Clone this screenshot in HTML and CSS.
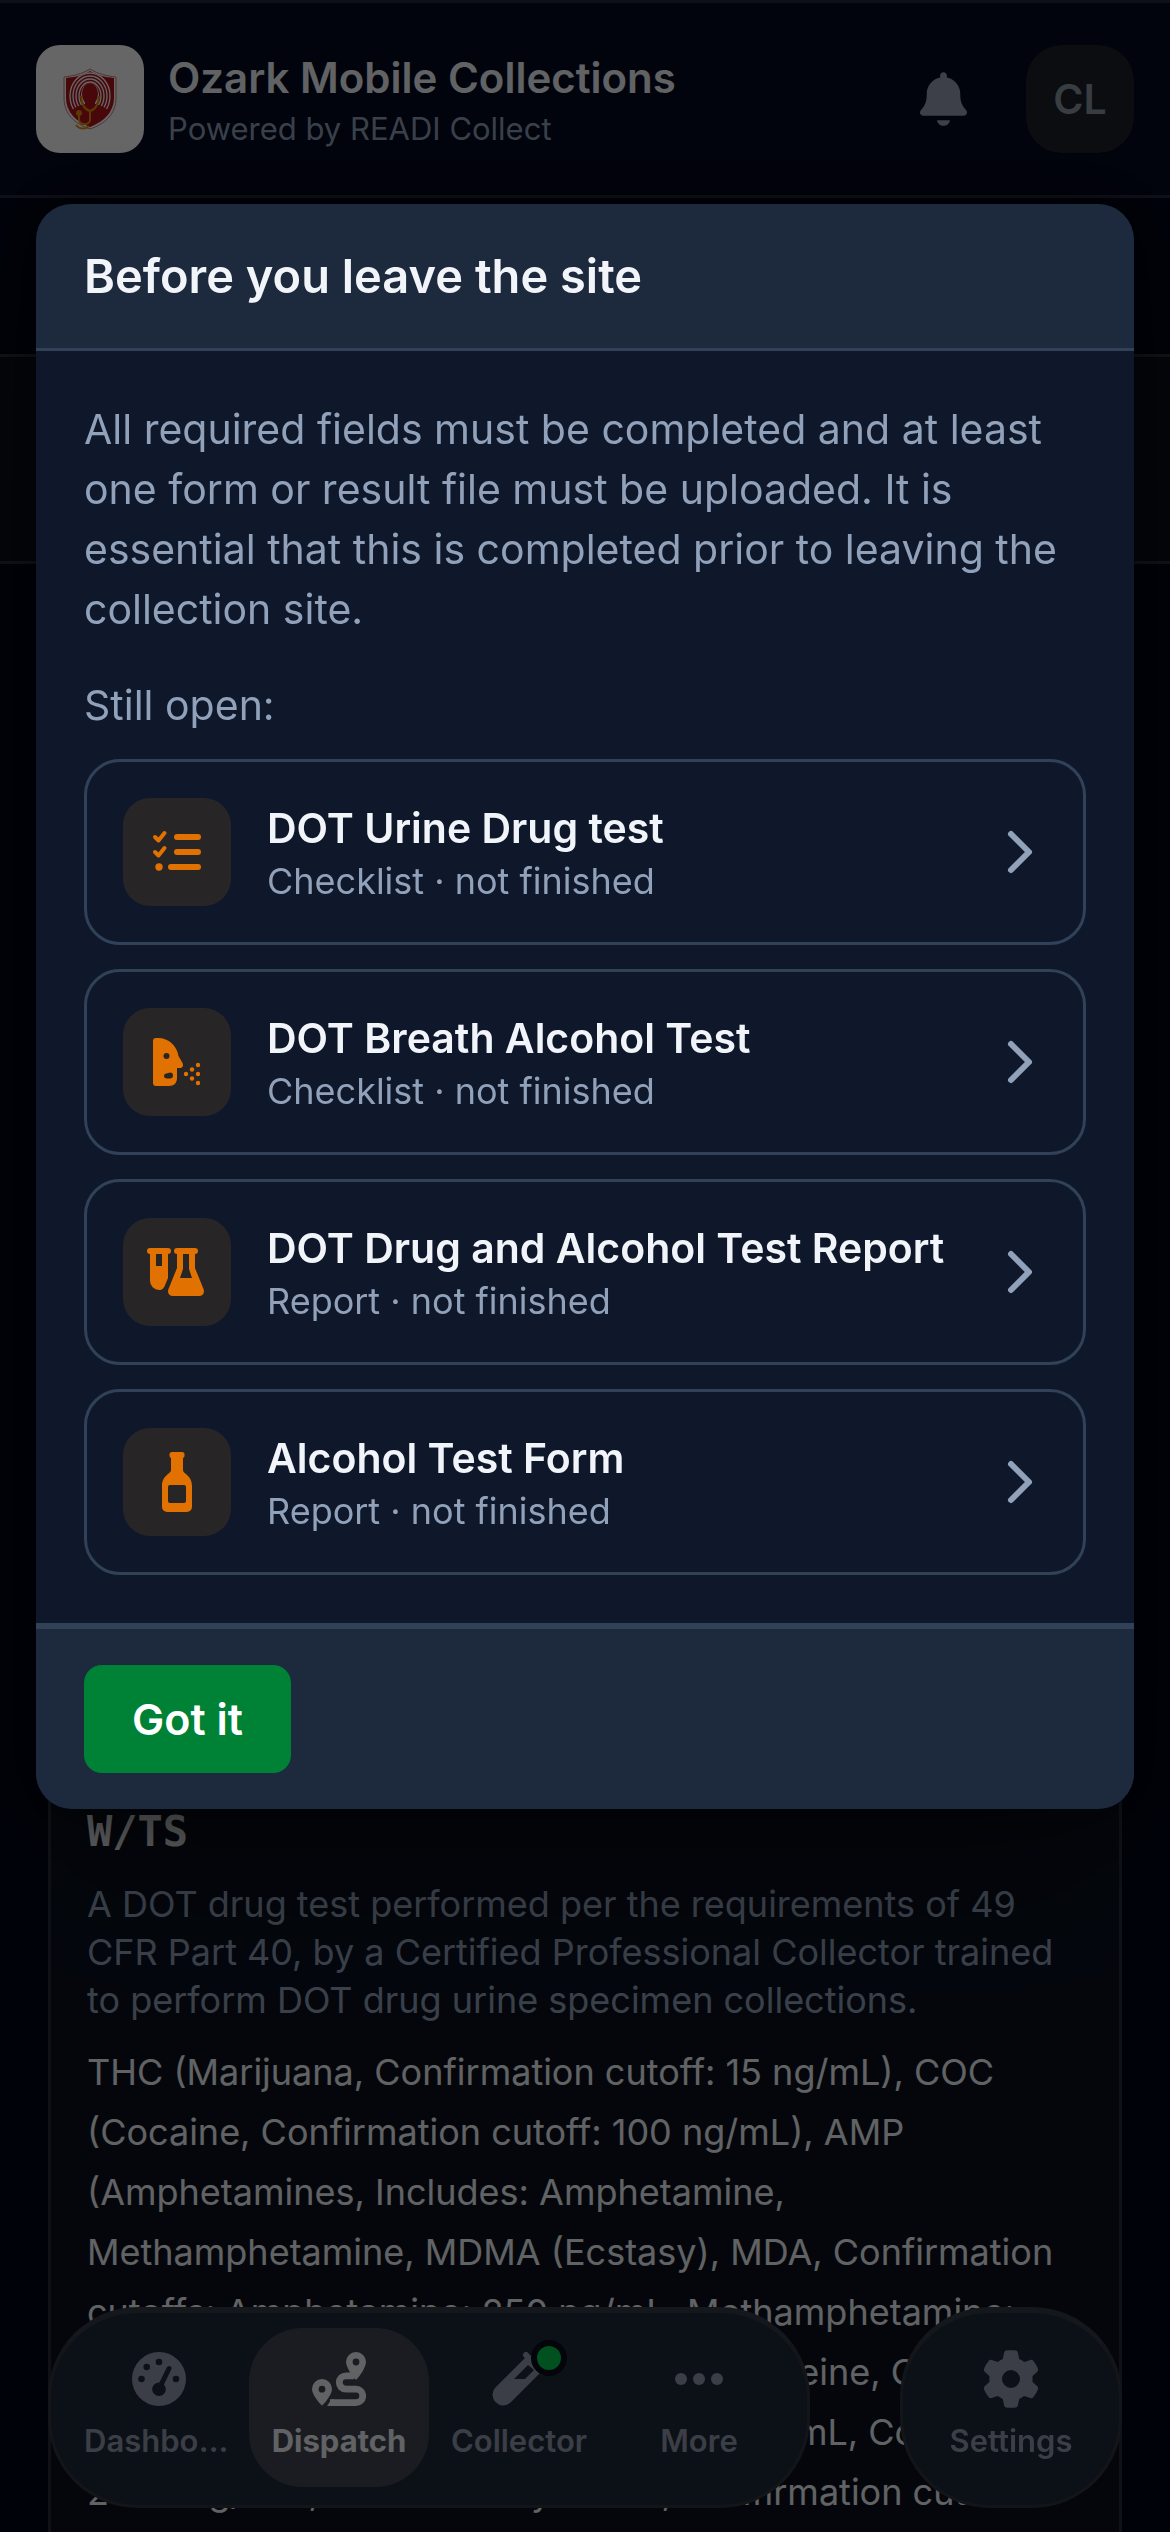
FILE: index.html
```html
<!DOCTYPE html>
<html lang="en">
<head>
    <meta charset="UTF-8">
    <meta name="viewport" content="width=device-width, initial-scale=1.0">
    <title>Ozark Mobile Collections</title>
    <link rel="stylesheet" href="styles.css">
</head>
<body>

    <div class="app">
        <!-- Top bar -->
        <header class="topbar">
            <div class="logo">
                <svg width="54" height="62" viewBox="0 0 54 62" aria-hidden="true">
                    <clipPath id="shield"><path d="M27 3C35 8 43 9 51 10V30C51 44 41 53 27 59C13 53 3 44 3 30V10C11 9 19 8 27 3Z"/></clipPath>
                    <path d="M27 1C35 6 44 8 53 9V30C53 46 42 56 27 61C12 56 1 46 1 30V9C10 8 19 6 27 1Z" fill="none" stroke="#c98080" stroke-width="1"/>
                    <g clip-path="url(#shield)">
                        <rect width="54" height="62" fill="#b5121b"/>
                        <g fill="none" stroke="#fff" stroke-width="1.3">
                            <ellipse cx="27" cy="28" rx="11" ry="14"/>
                            <ellipse cx="27" cy="28" rx="14" ry="17"/>
                            <ellipse cx="27" cy="28" rx="17" ry="20"/>
                            <ellipse cx="27" cy="28" rx="20" ry="23"/>
                        </g>
                        <ellipse cx="27" cy="27" rx="9" ry="12" fill="#fff"/>
                        <ellipse cx="27" cy="26" rx="8" ry="11" fill="#b5121b"/>
                        <path d="M22 30H32V36C41 38 47 42 49 49V62H5V49C7 42 13 38 22 36Z" fill="#b5121b"/>
                    </g>
                    <path d="M18 28C18 36 22 42 27 43C32 42 36 36 36 28M27 43V52C27 57 17 58 16 52V46M13 57C16 61 22 62 26 58" fill="none" stroke="#e0920c" stroke-width="2"/>
                    <circle cx="16" cy="45" r="3" fill="#e0920c"/>
                </svg>
            </div>
            <div class="brand">
                <h1>Ozark Mobile Collections</h1>
                <p>Powered by READI Collect</p>
            </div>
            <button class="bell" type="button" aria-label="Notifications">
                <svg width="47" height="54" viewBox="0 0 448 512" fill="currentColor"><path d="M224 0c-17.7 0-32 14.3-32 32V51.2C119 66 64 130.6 64 208v18.8c0 47-17.3 92.4-48.5 127.6l-7.4 8.3c-8.4 9.4-10.4 22.9-5.3 34.4S19.4 416 32 416H416c12.6 0 24-7.4 29.2-18.9s3.1-25-5.3-34.4l-7.4-8.3C401.3 319.2 384 273.9 384 226.8V208c0-77.4-55-142-128-156.8V32c0-17.7-14.3-32-32-32zm62 458H162c6 34 32 54 62 54s56-20 62-54z"/></svg>
            </button>
            <button class="avatar" type="button">CL</button>
        </header>

        <div class="toolbar"></div>
        <div class="strip"></div>

        <!-- Service details -->
        <main class="service">
            <h2 class="code">W/TS</h2>
            <p class="summary">A DOT drug test performed per the requirements of 49<br>CFR Part 40, by a Certified Professional Collector trained<br>to perform DOT drug urine specimen collections.</p>
            <p class="panel">THC (Marijuana, Confirmation cutoff: 15 ng/mL), COC<br>(Cocaine, Confirmation cutoff: 100 ng/mL), AMP<br>(Amphetamines, Includes: Amphetamine,<br>Methamphetamine, MDMA (Ecstasy), MDA, Confirmation<br>cutoffs: Amphetamine: 250 ng/mL, Methamphetamine:<br>250 ng/mL), OPIA (Opiates, Includes: Codeine, Codeine<br>Confirmation cutoffs: Morphine: 2000 ng/mL, Codeine:<br>2000 ng/mL), PCP (Phencyclidine, Confirmation cutoff:</p>
        </main>

        <!-- Bottom navigation -->
        <nav class="nav">
            <div class="pill">
                <a class="tab" href="#dashboard">
                    <svg width="54" height="54" viewBox="0 0 54 54">
                        <mask id="dial">
                            <circle cx="27" cy="27" r="27" fill="#fff"/>
                            <circle cx="9.5" cy="27" r="3.3"/><circle cx="14.7" cy="15" r="3.3"/><circle cx="27" cy="10" r="3.3"/><circle cx="44" cy="27" r="3.3"/><circle cx="27" cy="37.3" r="6.8"/>
                            <path d="M27 37L37 16.5" stroke="#000" stroke-width="5" stroke-linecap="round"/>
                        </mask>
                        <rect width="54" height="54" fill="currentColor" mask="url(#dial)"/>
                    </svg>
                    <span>Dashboard</span>
                </a>
                <a class="tab active" href="#dispatch">
                    <svg width="54" height="54" viewBox="0 0 54 54" fill="currentColor">
                        <path fill-rule="evenodd" d="M44 0a10 10 0 0 1 10 10C54 15 48 24 44 28C40 24 34 15 34 10A10 10 0 0 1 44 0zm0 6.6a3.4 3.4 0 1 0 0 6.8 3.4 3.4 0 0 0 0-6.8z"/>
                        <path fill-rule="evenodd" d="M10 27a10 10 0 0 1 10 10C20 42 14 50 10 53.5C6 50 0 42 0 37A10 10 0 0 1 10 27zm0 6.8a3.4 3.4 0 1 0 0 6.8 3.4 3.4 0 0 0 0-6.8z"/>
                        <path d="M42 23.8H34a6.7 6.7 0 0 0 0 13.4H44a6.7 6.7 0 0 1 0 13.4H18" fill="none" stroke="currentColor" stroke-width="6.8"/>
                        <path d="M19.5 47.2L15 54H22V47.2z"/>
                    </svg>
                    <span>Dispatch</span>
                </a>
                <a class="tab" href="#collector">
                    <i class="dot"></i>
                    <svg width="54" height="54" viewBox="0 0 54 54" fill="currentColor">
                        <path fill-rule="evenodd" d="M35 4L50 19L18.3 50.8A10.7 10.7 0 0 1 3.2 35.7zM36 13L22 27H33L42 18z"/>
                        <path d="M34 3L51 20" stroke="currentColor" stroke-width="6" stroke-linecap="round"/>
                    </svg>
                    <span>Collector</span>
                </a>
                <a class="tab" href="#more">
                    <svg width="54" height="54" viewBox="0 0 54 54" fill="currentColor"><circle cx="9" cy="27" r="6"/><circle cx="27" cy="27" r="6"/><circle cx="45" cy="27" r="6"/></svg>
                    <span>More</span>
                </a>
            </div>
            <div class="pill">
                <a class="tab" href="#settings">
                    <svg class="gear" width="54" height="54" viewBox="16 16 480 480" fill="currentColor"><path d="M495.9 166.6c3.2 8.7 .5 18.4-6.4 24.6l-43.3 39.4c1.1 8.3 1.7 16.8 1.7 25.4s-.6 17.1-1.7 25.4l43.3 39.4c6.9 6.2 9.6 15.9 6.4 24.6c-4.4 11.9-9.7 23.3-15.8 34.3l-4.7 8.1c-6.6 11-14 21.4-22.1 31.2c-5.9 7.2-15.7 9.6-24.5 6.8l-55.7-17.7c-13.4 10.3-28.2 18.9-44 25.4l-12.5 57.1c-2 9.1-9 16.3-18.2 17.8c-13.8 2.3-28 3.5-42.5 3.5s-28.7-1.2-42.5-3.5c-9.2-1.5-16.2-8.7-18.2-17.8l-12.5-57.1c-15.8-6.5-30.6-15.1-44-25.4L83.1 425.9c-8.8 2.8-18.6 .3-24.5-6.8c-8.1-9.8-15.5-20.2-22.1-31.2l-4.7-8.1c-6.1-11-11.4-22.4-15.8-34.3c-3.2-8.7-.5-18.4 6.4-24.6l43.3-39.4C64.6 273.1 64 264.6 64 256s.6-17.1 1.7-25.4L22.4 191.2c-6.9-6.2-9.6-15.9-6.4-24.6c4.4-11.9 9.7-23.3 15.8-34.3l4.7-8.1c6.6-11 14-21.4 22.1-31.2c5.9-7.2 15.7-9.6 24.5-6.8l55.7 17.7c13.4-10.3 28.2-18.9 44-25.4l12.5-57.1c2-9.1 9-16.3 18.2-17.8C227.3 1.2 241.5 0 256 0s28.7 1.2 42.5 3.5c9.2 1.5 16.2 8.7 18.2 17.8l12.5 57.1c15.8 6.5 30.6 15.1 44 25.4l55.7-17.7c8.8-2.8 18.6-.3 24.5 6.8c8.1 9.8 15.5 20.2 22.1 31.2l4.7 8.1c6.1 11 11.4 22.4 15.8 34.3zM256 336a80 80 0 1 0 0-160 80 80 0 1 0 0 160z"/></svg>
                    <span>Settings</span>
                </a>
            </div>
        </nav>
    </div>

    <!-- Leave site dialog -->
    <div class="overlay">
        <section class="modal" role="dialog" aria-modal="true" aria-labelledby="modalTitle">
            <header class="modal-header">
                <h2 id="modalTitle">Before you leave the site</h2>
            </header>
            <div class="modal-body">
                <p>All required fields must be completed and at least one form or result file must be uploaded. It is essential that this is completed prior to leaving the collection site.</p>
                <p>Still open:</p>
                <div class="tasks">
                    <button class="task" type="button">
                        <span class="task-icon">
                            <svg width="54" height="54" viewBox="0 0 54 54" fill="none" stroke="currentColor" stroke-width="6" stroke-linecap="round">
                                <path d="M27 12H48M27 27H48M21 42H48"/>
                                <path d="M5 12L8.500 15.500L14.500 8M5 27L8.500 30.500L14.500 23" stroke-width="4" stroke-linejoin="round"/>
                                <circle cx="9" cy="42" r="3.700" fill="currentColor" stroke="none"/>
                            </svg>
                        </span>
                        <span class="task-text"><strong>DOT Urine Drug test</strong><small>Checklist · not finished</small></span>
                        <svg class="chevron" width="54" height="54" viewBox="0 0 54 54"><path d="M18 9L36 27L18 45"/></svg>
                    </button>
                    <button class="task" type="button">
                        <span class="task-icon">
                            <svg width="54" height="54" viewBox="0 0 54 54" fill="currentColor">
                                <path fill-rule="evenodd" d="M6 3H8C19 3 27 11 28.500 21L32.500 28C34 31 32 33 30 33H27V43C27 48 24 51 19 51H6a3 3 0 0 1-3-3V6a3 3 0 0 1 3-3zM16.500 18a3 3 0 1 0 0 6 3 3 0 0 0 0-6zM16.500 38.500a2.500 2.500 0 0 0 0 5H20a3 3 0 0 0 0-6z"/>
                                <circle cx="36" cy="39" r="2.200"/><circle cx="42" cy="34.500" r="2.200"/><circle cx="42" cy="43.500" r="2.200"/><circle cx="48" cy="30" r="2.200"/><circle cx="48" cy="39" r="2.200"/><circle cx="48" cy="48" r="2.200"/>
                            </svg>
                        </span>
                        <span class="task-text"><strong>DOT Breath Alcohol Test</strong><small>Checklist · not finished</small></span>
                        <svg class="chevron" width="54" height="54" viewBox="0 0 54 54"><path d="M18 9L36 27L18 45"/></svg>
                    </button>
                    <button class="task" type="button">
                        <span class="task-icon">
                            <svg width="60" height="54" viewBox="-3 0 60 54" fill="currentColor">
                                <rect x="-3" y="3" width="24" height="6" rx="3"/><rect x="24" y="3" width="24" height="6" rx="3"/>
                                <path fill-rule="evenodd" d="M0 6H18V33L14.500 41.500C13 44.500 11 45 9 45A9 9 0 0 1 0 36zM6 9V21H12V9z"/>
                                <path fill-rule="evenodd" d="M27 6V23L18.500 44C17 48 19 51 23 51H49C53 51 55 48 53.500 44L45 23V6zM33 9H39V24L42 33H30L33 24z"/>
                            </svg>
                        </span>
                        <span class="task-text"><strong>DOT Drug and Alcohol Test Report</strong><small>Report · not finished</small></span>
                        <svg class="chevron" width="54" height="54" viewBox="0 0 54 54"><path d="M18 9L36 27L18 45"/></svg>
                    </button>
                    <button class="task" type="button">
                        <span class="task-icon">
                            <svg width="54" height="60" viewBox="0 0 54 60" fill="currentColor">
                                <rect x="19.500" y="0" width="15" height="6" rx="2.500"/>
                                <path fill-rule="evenodd" d="M21 4V18C21 22 12 23 12 34V55a5 5 0 0 0 5 5H37a5 5 0 0 0 5-5V34C42 23 33 22 33 18V4zM20 33H34a2 2 0 0 1 2 2V49a2 2 0 0 1-2 2H20a2 2 0 0 1-2-2V35a2 2 0 0 1 2-2z"/>
                            </svg>
                        </span>
                        <span class="task-text"><strong>Alcohol Test Form</strong><small>Report · not finished</small></span>
                        <svg class="chevron" width="54" height="54" viewBox="0 0 54 54"><path d="M18 9L36 27L18 45"/></svg>
                    </button>
                </div>
            </div>
            <footer class="modal-footer">
                <button class="primary" type="button">Got it</button>
            </footer>
        </section>
    </div>

</body>
</html>
```

FILE: styles.css
```css
* {
    box-sizing: border-box;
}
body {
    margin: 0;
    font-family: Inter, 'Liberation Sans', sans-serif;
    font-size: 41px;
    line-height: 60px;
    color: #f1f5f9;
    background-color: #020618;
}
h1, h2, p {
    margin: 0;
}
button {
    font-family: inherit;
    border: none;
    padding: 0;
    cursor: pointer;
}
svg {
    display: block;
    flex-shrink: 0;
}

/* Page behind the dialog */
.app {
    display: flex;
    flex-direction: column;
    height: 100vh;
    overflow: hidden;
}
.topbar {
    display: flex;
    align-items: center;
    gap: 24px;
    padding: 42px 36px;
    border-top: 3px solid #222a38;
    border-bottom: 3px solid #222a38;
    background-color: #030821;
}
.logo {
    display: flex;
    align-items: center;
    justify-content: center;
    width: 108px;
    height: 108px;
    border-radius: 24px;
    background-color: #fff;
}
.brand {
    flex: 1;
    padding-top: 6px;
}
.brand h1 {
    font-size: 42px;
    line-height: 54px;
    font-weight: 600;
}
.brand p {
    font-size: 31px;
    line-height: 48px;
    color: #90a1b9;
}
.bell {
    display: flex;
    align-items: center;
    justify-content: center;
    width: 108px;
    height: 108px;
    margin-right: 5px;
    color: #99a1b4;
    background: none;
}
.avatar {
    width: 108px;
    height: 108px;
    border-radius: 36px;
    background-color: #1c212c;
    color: #8d99a5;
    font-size: 41px;
    font-weight: 600;
}
.toolbar {
    height: 156px;
}
.strip {
    height: 210px;
    border-top: 3px solid #2a303c;
    border-bottom: 3px solid #2a303c;
    background-color: #0a0f1c;
}
.service {
    flex: 1;
    display: flex;
    flex-direction: column;
    justify-content: flex-end;
    gap: 18px;
    margin: 48px 48px 0;
    padding: 0 36px 10px;
    border: 3px solid #262c38;
    border-bottom: none;
    background-color: #0a101f;
    white-space: nowrap;
}
.code {
    font-family: 'DejaVu Sans Mono', monospace;
    font-size: 42px;
    font-weight: 700;
}
.summary {
    font-size: 36px;
    line-height: 48px;
    color: #90a1b9;
}
.panel {
    font-size: 36px;
    line-height: 60px;
}

/* Bottom navigation */
.nav {
    position: fixed;
    left: 0;
    right: 0;
    bottom: 24px;
    display: flex;
    justify-content: space-between;
    padding: 0 48px;
}
.pill {
    display: flex;
    padding: 15px 18px 18px;
    border: 3px solid #30363f;
    border-top: 6px solid #343a45;
    border-radius: 90px;
    background-color: #202a3b;
}
.tab {
    position: relative;
    display: flex;
    flex-direction: column;
    align-items: center;
    gap: 15px;
    width: 180px;
    height: 159px;
    padding: 24px 15px 0;
    border-radius: 54px;
    color: #949bae;
    font-size: 31px;
    font-weight: 600;
    text-decoration: none;
}
.tab span {
    max-width: 100%;
    overflow: hidden;
    text-overflow: ellipsis;
    line-height: 39px;
}
.tab.active {
    background-color: #444854;
    color: #f1f5f9;
    font-weight: 700;
}
.gear {
    overflow: visible;
}
.dot {
    position: absolute;
    top: 12px;
    right: 42px;
    width: 36px;
    height: 36px;
    border: 6px solid #080e1c;
    border-radius: 50%;
    background-color: #00c950;
}

/* Dialog */
.overlay {
    position: fixed;
    inset: 0;
    display: flex;
    align-items: flex-start;
    padding: 204px 36px 0;
    background-color: rgba(0, 0, 0, 0.6);
}
.modal {
    width: 100%;
    border-radius: 36px;
    overflow: hidden;
    background-color: #0f172b;
    box-shadow: 0 75px 150px -36px rgba(0, 0, 0, 0.4), 0 0 60px rgba(0, 0, 0, 0.5);
}
.modal-header {
    padding: 42px 48px;
    border-bottom: 3px solid #314158;
    background-color: #1d293d;
}
.modal-header h2 {
    font-size: 47px;
    font-weight: 600;
}
.modal-body {
    padding: 48px;
    color: #90a1b9;
}
.modal-body p + p {
    margin-top: 36px;
}
.tasks {
    display: flex;
    flex-direction: column;
    gap: 24px;
    margin-top: 24px;
}
.task {
    display: flex;
    align-items: center;
    gap: 36px;
    padding: 36px;
    border: 3px solid #314158;
    border-radius: 36px;
    background: none;
    text-align: left;
}
.task-icon {
    display: flex;
    align-items: center;
    justify-content: center;
    width: 108px;
    height: 108px;
    border-radius: 27px;
    background-color: #282527;
    color: #e17100;
}
.task-text {
    flex: 1;
    display: flex;
    flex-direction: column;
}
.task-text strong {
    font-size: 41px;
    line-height: 57px;
    font-weight: 600;
    color: #f1f5f9;
}
.task-text small {
    font-size: 36px;
    line-height: 48px;
    color: #90a1b9;
}
.chevron {
    fill: none;
    stroke: #90a1b9;
    stroke-width: 6px;
    stroke-linecap: round;
    stroke-linejoin: round;
}
.modal-footer {
    padding: 36px 48px;
    border-top: 6px solid #314158;
    background-color: #1d293d;
}
.primary {
    height: 108px;
    padding: 0 48px;
    border-radius: 18px;
    background-color: #008236;
    color: #fff;
    font-size: 43px;
    font-weight: 600;
}
```
